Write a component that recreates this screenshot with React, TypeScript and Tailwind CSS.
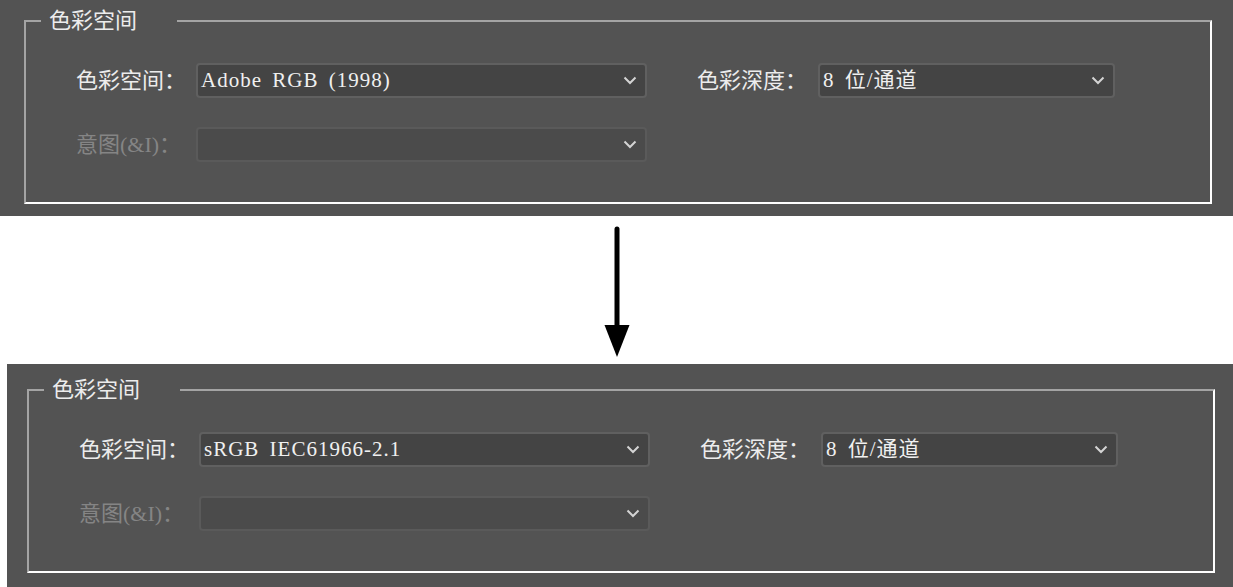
import React from 'react';

const FONT = { fontFamily: '"Liberation Serif", "Noto Sans CJK SC", serif' };

function Chevron() {
  return (
    <svg width="14" height="9" viewBox="0 0 14 9" className="shrink-0">
      <polyline points="1.5,1.5 7,7 12.5,1.5" fill="none" stroke="#d4d4d4" strokeWidth="2" />
    </svg>
  );
}

function Select({ value, className, disabled }: { value?: string; className: string; disabled?: boolean }) {
  return (
    <div
      className={`flex h-[35px] items-center justify-between rounded-[4px] border-2 pl-[3px] pr-[8px] ${
        disabled ? 'border-[#5a5a5a] bg-[#4b4b4b]' : 'border-[#606060] bg-[#444444]'
      } ${className}`}
    >
      <span className="whitespace-pre text-[21px] leading-none tracking-[1px] text-[#f0f0f0] [word-spacing:4px]">{value}</span>
      <Chevron />
    </div>
  );
}

function GroupBox({ profile }: { profile: string }) {
  return (
    <fieldset className="h-[194px] w-[1188px] border-2 border-t-[#a4a4a4] border-l-[#a4a4a4] border-r-white border-b-white">
      <legend className="ml-[15px] pl-[8px] pr-[40px] text-[22px] leading-[22px] text-[#ececec]">色彩空间</legend>
      <div className="mt-[31px] flex flex-col gap-[29px] pl-[50px] text-[22px]">
        <div className="flex items-center">
          <span className="w-[120px] text-[#ececec]">色彩空间：</span>
          <Select className="w-[451px]" value={profile} />
          <span className="ml-[50px] w-[121px] text-[#ececec]">色彩深度：</span>
          <Select className="w-[297px]" value="8 位/通道" />
        </div>
        <div className="flex items-center">
          <span className="w-[120px] text-[#858585]">意图(&amp;I)：</span>
          <Select className="w-[451px]" disabled />
        </div>
      </div>
    </fieldset>
  );
}

export default function App() {
  return (
    <div className="flex h-[587px] w-[1233px] flex-col overflow-hidden bg-white" style={FONT}>
      <div className="h-[216px] shrink-0 bg-[#535353] pl-[24px] pt-[10px]">
        <GroupBox profile="Adobe RGB (1998)" />
      </div>
      <div className="flex h-[148px] shrink-0 justify-center pt-[10px]">
        <svg width="28" height="132" viewBox="0 0 28 132">
          <line x1="14" y1="3" x2="14" y2="104" stroke="#000" strokeWidth="5" strokeLinecap="round" />
          <polygon points="1.5,99 26.5,99 14,131" fill="#000" />
        </svg>
      </div>
      <div className="ml-[7px] h-[223px] shrink-0 bg-[#535353] pl-[20px] pt-[15px]">
        <GroupBox profile="sRGB IEC61966-2.1" />
      </div>
    </div>
  );
}
